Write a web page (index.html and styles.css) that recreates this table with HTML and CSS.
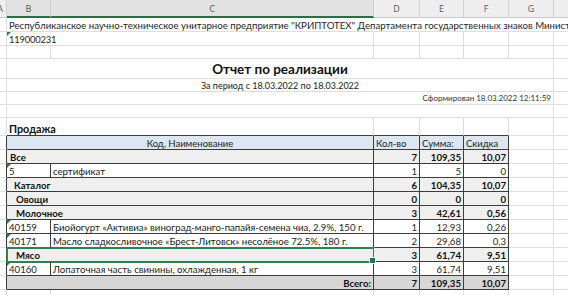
FILE: index.html
```html
<!DOCTYPE html>
<html lang="ru">
<head>
<meta charset="utf-8">
<title>Отчет по реализации</title>
<link rel="stylesheet" href="styles.css">
</head>
<body>
<div class="sheet">
  <div class="row hdr">
    <div class="c ca">A</div><div class="c sel">B</div><div class="c sel">C</div><div class="c">D</div><div class="c">E</div><div class="c">F</div><div class="c">G</div><div class="c last"></div>
  </div>
  <div class="row r14">
    <div class="c"></div><div class="c s7 org">Республиканское научно-техническое унитарное предприятие "КРИПТОТЕХ" Департамента государственных знаков Министерства финансов Республики Беларусь</div>
  </div>
  <div class="row r14">
    <div class="c"></div><div class="c s2 plain tri"><span class="code">119000231</span></div><div class="c"></div><div class="c"></div><div class="c"></div><div class="c"></div><div class="c last"></div>
  </div>
  <div class="row r13">
    <div class="c"></div><div class="c"></div><div class="c"></div><div class="c"></div><div class="c"></div><div class="c"></div><div class="c"></div><div class="c last"></div>
  </div>
  <div class="row r20">
    <div class="c"></div><div class="c s6 center title">Отчет по реализации</div><div class="c last"></div>
  </div>
  <div class="row r13">
    <div class="c"></div><div class="c s6 center sub">За период с 18.03.2022 по 18.03.2022</div><div class="c last"></div>
  </div>
  <div class="row r13">
    <div class="c"></div><div class="c s6 right small">Сформирован 18.03.2022 12:11:59</div><div class="c last"></div>
  </div>
  <div class="row r13">
    <div class="c"></div><div class="c s6"></div><div class="c last"></div>
  </div>
  <div class="row r18">
    <div class="c"></div><div class="c s2 section tb">Продажа</div><div class="c tb"></div><div class="c tb"></div><div class="c tb"></div><div class="c"></div><div class="c last"></div>
  </div>
  <div class="row r14">
    <div class="c tl"></div><div class="c s2 t th center">Код, Наименование</div><div class="c t th">Кол-во</div><div class="c t th">Сумма:</div><div class="c t th">Скидка</div><div class="c"></div><div class="c last"></div>
  </div>
  <div class="row r14">
    <div class="c tl"></div><div class="c s2 t grp b lv0">Все</div><div class="c t grp b num">7</div><div class="c t grp b num">109,35</div><div class="c t grp b num">10,07</div><div class="c"></div><div class="c last"></div>
  </div>
  <div class="row r14">
    <div class="c tl"></div><div class="c t txt tri">5</div><div class="c t txt">сертификат</div><div class="c t num">1</div><div class="c t num">5</div><div class="c t num">0</div><div class="c"></div><div class="c last"></div>
  </div>
  <div class="row r14">
    <div class="c tl"></div><div class="c s2 t grp b lv1">Каталог</div><div class="c t grp b num">6</div><div class="c t grp b num">104,35</div><div class="c t grp b num">10,07</div><div class="c"></div><div class="c last"></div>
  </div>
  <div class="row r14">
    <div class="c tl"></div><div class="c s2 t grp b lv2">Овощи</div><div class="c t grp b num">0</div><div class="c t grp b num">0</div><div class="c t grp b num">0</div><div class="c"></div><div class="c last"></div>
  </div>
  <div class="row r14">
    <div class="c tl"></div><div class="c s2 t grp b lv2">Молочное</div><div class="c t grp b num">3</div><div class="c t grp b num">42,61</div><div class="c t grp b num">0,56</div><div class="c"></div><div class="c last"></div>
  </div>
  <div class="row r14">
    <div class="c tl"></div><div class="c t txt tri">40159</div><div class="c t txt">Биойогурт «Активиа» виноград-манго-папайя-семена чиа, 2.9%, 150 г.</div><div class="c t num">1</div><div class="c t num">12,93</div><div class="c t num">0,26</div><div class="c"></div><div class="c last"></div>
  </div>
  <div class="row r14">
    <div class="c tl"></div><div class="c t txt tri">40171</div><div class="c t txt">Масло сладкосливочное «Брест-Литовск» несолёное 72.5%, 180 г.</div><div class="c t num">2</div><div class="c t num">29,68</div><div class="c t num">0,3</div><div class="c"></div><div class="c last"></div>
  </div>
  <div class="row r14">
    <div class="c tl"></div><div class="c s2 t grp b lv2 active">Мясо</div><div class="c t grp b num">3</div><div class="c t grp b num">61,74</div><div class="c t grp b num">9,51</div><div class="c"></div><div class="c last"></div>
  </div>
  <div class="row r14">
    <div class="c tl"></div><div class="c t txt tri">40160</div><div class="c t txt">Лопаточная часть свинины, охлажденная, 1 кг</div><div class="c t num">3</div><div class="c t num">61,74</div><div class="c t num">9,51</div><div class="c"></div><div class="c last"></div>
  </div>
  <div class="row r14">
    <div class="c tl"></div><div class="c s2 t tot b right">Всего:</div><div class="c t tot b num">7</div><div class="c t tot b num">109,35</div><div class="c t tot b num">10,07</div><div class="c"></div><div class="c last"></div>
  </div>
  <div class="row r14">
    <div class="c"></div><div class="c"></div><div class="c"></div><div class="c"></div><div class="c"></div><div class="c"></div><div class="c"></div><div class="c last"></div>
  </div>
</div>
</body>
</html>
```

FILE: styles.css
```css
html, body {
  margin: 0;
  padding: 0;
  background: #ffffff;
  overflow: hidden;
}

.sheet {
  width: 568px;
  height: 295px;
  overflow: hidden;
  font-family: "Lato", "Open Sans", sans-serif;
  font-size: 9.65px;
  color: #1f1f1f;
}

.row {
  display: grid;
  grid-template-columns: 7px 44px 323px 46px 44px 45px 45px 14px;
}

.r13 { height: 13px; }
.r14 { height: 14px; }
.r18 { height: 18px; }
.r20 { height: 20px; }

.c {
  box-sizing: border-box;
  border-right: 1px solid #dedede;
  border-bottom: 1px solid #dedede;
  display: flex;
  align-items: flex-end;
  padding: 0 2px 0 2px;
  white-space: nowrap;
  overflow: hidden;
  position: relative;
  min-width: 0;
}

.c.last { border-right: none; }

.s2 { grid-column: span 2; }
.s6 { grid-column: span 6; }
.s7 { grid-column: span 7; border-right: none; }

/* column header strip */
.hdr { height: 18px; }
.hdr .c {
  background: #eeeeee;
  border-right: 1px solid #cfcfcf;
  border-bottom: 1px solid #c8c8c8;
  justify-content: center;
  align-items: center;
  padding: 0;
  color: #555555;
  font-family: "Open Sans", "Lato", sans-serif;
  font-size: 9px;
}
.hdr .c.ca {
  justify-content: flex-end;
  padding-right: 3px;
  overflow: visible;
}
.hdr .c.sel {
  background: #e2e2e2;
  color: #2a6b43;
  border-bottom: 2px solid #217346;
}
.hdr .c.last { border-right: none; }

.plain {
  padding-left: 1px;
}
.code {
  display: block;
  padding-left: 1px;
  font-size: 9.4px;
  letter-spacing: -0.2px;
}

.center { justify-content: center; }
.right { justify-content: flex-end; }

.title {
  font-size: 13.5px;
  font-weight: 700;
  color: #111;
  padding-bottom: 1px;
}
.sub {
  font-size: 9px;
  color: #222;
}
.small {
  font-size: 8px;
  color: #333;
  padding-right: 2px;
  padding-bottom: 1px;
}

.section {
  font-size: 10.8px;
  font-weight: 700;
  color: #111;
}

/* report table */
.tb { border-bottom-color: #3c3c3c; }
.tl { border-right-color: #3c3c3c; }
.t {
  border-right-color: #3c3c3c;
  border-bottom-color: #3c3c3c;
}
.th {
  background: #dde7f2;
  color: #222;
  font-size: 9.5px;
}
.grp { background: #efefef; }
.tot { background: #d6d6d6; }
.b { font-weight: 700; color: #111; }
.num {
  justify-content: flex-end;
  padding-right: 2px;
}
.txt { color: #222; }

.lv0 { padding-left: 3px; }
.lv1 { padding-left: 7px; }
.lv2 { padding-left: 9px; }

.tri::before {
  content: "";
  position: absolute;
  left: 0;
  top: 0;
  border-top: 4px solid #2d7d4a;
  border-right: 4px solid transparent;
}

.active {
  overflow: visible;
  outline: 2px solid #2f8050;
  outline-offset: -1px;
}
.active::after {
  content: "";
  position: absolute;
  right: -3px;
  bottom: -3px;
  width: 5px;
  height: 5px;
  background: #217346;
  border: 1px solid #ffffff;
  z-index: 2;
}
```
